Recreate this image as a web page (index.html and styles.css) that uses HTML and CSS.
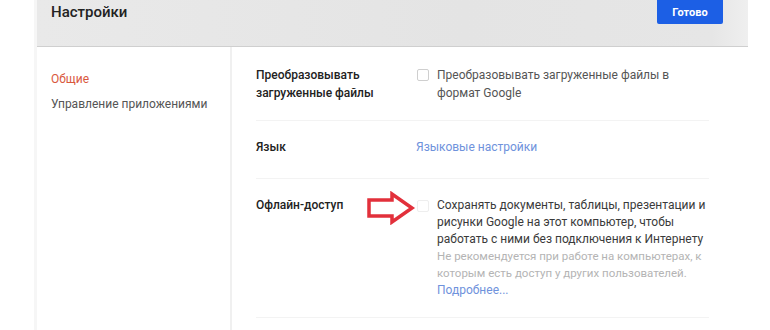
FILE: index.html
```html
<!DOCTYPE html>
<html lang="ru">
<head>
    <meta charset="UTF-8">
    <meta name="viewport" content="width=device-width, initial-scale=1.0">
    <title>Настройки</title>
    <link rel="stylesheet" href="styles.css">
</head>
<body>
    <div class="panel">
        <div class="header">
            <h1>Настройки</h1>
            <button class="done">Готово</button>
        </div>

        <div class="main">
            <ul class="sidebar">
                <li class="active">Общие</li>
                <li>Управление приложениями</li>
            </ul>

            <div class="content">
                <div class="row">
                    <div class="label">Преобразовывать<br>загруженные файлы</div>
                    <label class="option">
                        <span class="box"></span>
                        <span>Преобразовывать загруженные файлы в<br>формат Google</span>
                    </label>
                </div>

                <div class="row row-lang">
                    <div class="label">Язык</div>
                    <a class="link" href="#">Языковые настройки</a>
                </div>

                <div class="row row-offline">
                    <div class="label">Офлайн-доступ</div>
                    <label class="option">
                        <span class="box faint"></span>
                        <span>
                            <span class="dark">Сохранять документы, таблицы, презентации и<br>рисунки Google на этот компьютер, чтобы<br>работать с ними без подключения к Интернету</span><br>
                            <span class="hint">Не рекомендуется при работе на компьютерах, к<br>которым есть доступ у других пользователей.</span><br>
                            <a class="link" href="#">Подробнее...</a>
                        </span>
                    </label>
                    <!-- красная стрелка-пометка -->
                    <svg class="arrow" width="50" height="34" viewBox="0 0 50 34">
                        <polygon points="3,9 26,9 26,3 46,17 26,31 26,25 3,25" fill="#fff" stroke="#e2303b" stroke-width="3.5" stroke-linejoin="miter"/>
                    </svg>
                </div>
            </div>
        </div>
    </div>
</body>
</html>
```

FILE: styles.css
```css
body {
    margin: 0;
    font-family: Roboto, "Liberation Sans", sans-serif;
    font-size: 12px;
    color: #555;
    background-color: #fff;
}

.panel {
    margin-left: 34px;
    width: 714px;
    height: 330px;
    border-left: 3px solid #f6f6f6;
    box-sizing: border-box;
}

.header {
    height: 46px;
    display: flex;
    justify-content: space-between;
    align-items: flex-start;
    padding: 0 25px 0 14px;
    background: linear-gradient(to right, #e9e9e9, #e4e4e4 60%, #e6e6e6 95%, #efefef);
    border-bottom: 1px solid #cfcfcf;
}

h1 {
    margin: 0;
    font-size: 15px;
    font-weight: 500;
    line-height: 24px;
    color: #222;
}

.done {
    width: 66px;
    height: 24px;
    border: none;
    border-radius: 0 0 2px 2px;
    background-color: #1c5fe5;
    color: #fff;
    font-family: inherit;
    font-size: 11px;
    font-weight: 700;
    cursor: pointer;
}

.main {
    display: flex;
}

.sidebar {
    width: 195px;
    margin: 0;
    padding: 20px 0 0 14px;
    list-style: none;
    border-right: 2px solid #f0f0f0;
    height: 283px;
    box-sizing: border-box;
}

.sidebar li {
    line-height: 25px;
    color: #555;
}

.sidebar .active {
    color: #d9583d;
}

.content {
    width: 453px;
    margin-left: 24px;
}

.row {
    position: relative;
    display: flex;
    padding: 19px 0 18px;
    line-height: 18px;
    border-bottom: 1px solid #f3f3f3;
}

.row-lang {
    padding: 17px 0 22px;
}

.row-offline {
    line-height: 17px;
    padding: 18px 0 18px;
}

.label {
    width: 160px;
    flex-shrink: 0;
    font-weight: 500;
    color: #222;
}

.option {
    display: flex;
    align-items: flex-start;
}

.box {
    width: 10px;
    height: 10px;
    margin: 3px 8px 0 1px;
    border: 1px solid #cfcfcf;
    border-radius: 2px;
    flex-shrink: 0;
}

.box.faint {
    border-color: #eee;
}

.dark {
    color: #3a3a3a;
}

.hint {
    color: #b4b4b4;
    font-size: 11.5px;
}

.link {
    color: #6f92dc;
    text-decoration: none;
}

.arrow {
    position: absolute;
    left: 110px;
    top: 12px;
}
```
